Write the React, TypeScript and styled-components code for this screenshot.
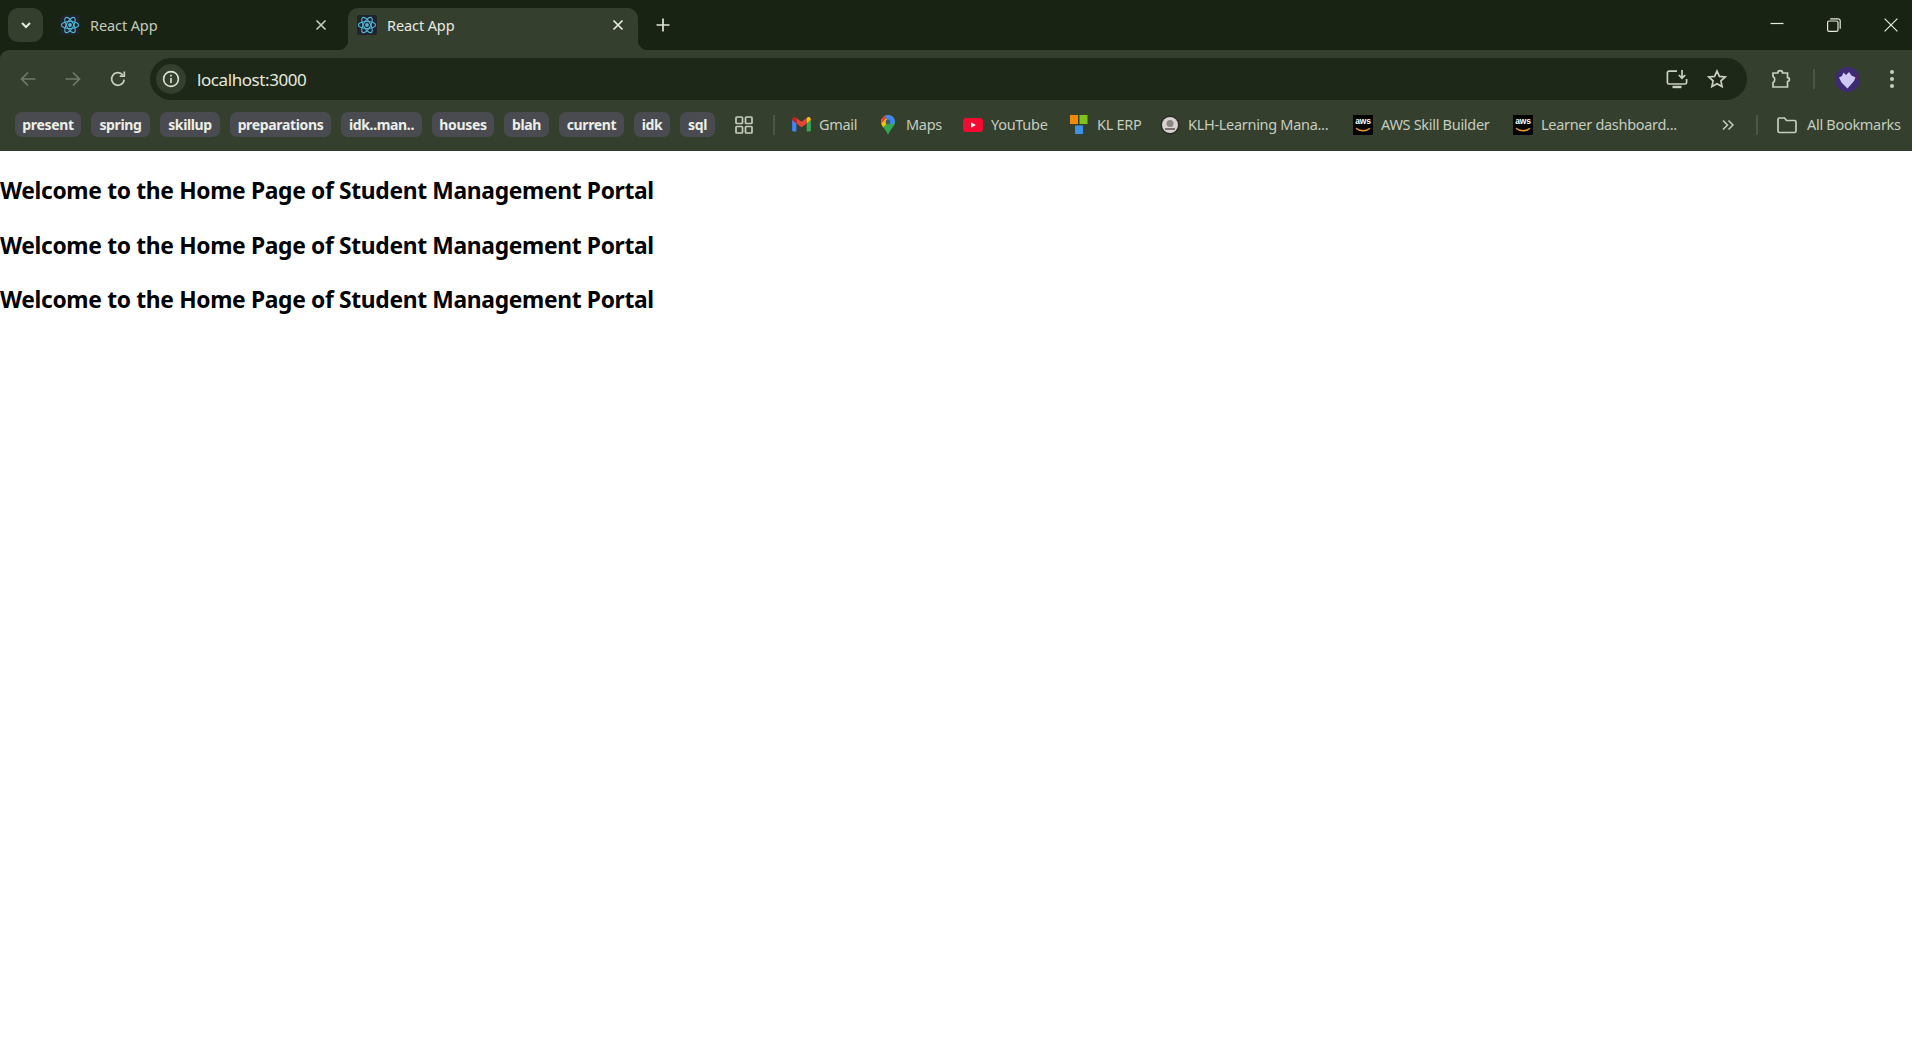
import React from "react";
import styled, { createGlobalStyle } from "styled-components";

const Global = createGlobalStyle`
  html, body { margin: 0; padding: 0; background: #fff; }
  body { font-family: "Noto Sans", "Open Sans", sans-serif; }
`;

const Page = styled.div`
  min-height: 1061px;
  display: flex;
  flex-direction: column;
  overflow: hidden;
`;

const Chrome = styled.header`
  background: #192314;
  display: flex;
  flex-direction: column;
`;

const TabStrip = styled.div`
  height: 50px;
  display: flex;
  padding-left: 8px;
  padding-right: 14px;
  box-sizing: border-box;
`;

const TabSearch = styled.div`
  width: 35px;
  height: 34px;
  margin-top: 8px;
  border-radius: 10px;
  background: #343f2e;
  display: flex;
  align-items: center;
  justify-content: center;
  color: #e6eadf;
`;

const Tab = styled.div<{ $active?: boolean; $ml: number }>`
  position: relative;
  width: 290px;
  height: 42px;
  margin-top: 8px;
  margin-left: ${(p) => p.$ml}px;
  padding: 0 13px 8px 9px;
  box-sizing: border-box;
  display: flex;
  align-items: center;
  border-radius: 10px 10px 0 0;
  background: ${(p) => (p.$active ? "#343f2e" : "transparent")};
  color: ${(p) => (p.$active ? "#e8ebe2" : "#c2cabb")};
  ${(p) =>
    p.$active &&
    `
    &::before, &::after {
      content: "";
      position: absolute;
      bottom: 0;
      width: 10px;
      height: 10px;
    }
    &::before {
      left: -10px;
      background: radial-gradient(circle at 0 0, transparent 10px, #343f2e 10.5px);
    }
    &::after {
      right: -10px;
      background: radial-gradient(circle at 100% 0, transparent 10px, #343f2e 10.5px);
    }
  `}
`;

const Favicon = styled.span`
  width: 20px;
  height: 20px;
  flex: none;
  background: #20232a;
  border-radius: 2px;
  display: flex;
`;

const TabTitle = styled.span`
  margin-left: 10px;
  font-size: 14.5px;
  letter-spacing: -0.1px;
  flex: 1;
  white-space: nowrap;
`;

const TabClose = styled.span`
  width: 14px;
  height: 14px;
  display: flex;
  color: inherit;
`;

const NewTab = styled.div`
  width: 16px;
  height: 16px;
  margin: 17px 0 0 17px;
  color: #dfe4d8;
  display: flex;
`;

const WindowControls = styled.div`
  margin-left: auto;
  display: flex;
  gap: 43px;
  padding-top: 18px;
  color: #e6eadf;
`;

const WindowIcon = styled.svg`
  width: 14px;
  height: 14px;
  display: block;
`;

const ToolRow = styled.div`
  height: 50px;
  background: #343f2e;
  border-radius: 9px 0 0 0;
  display: flex;
  align-items: flex-start;
  padding-left: 5px;
  box-sizing: border-box;
`;

const NavButton = styled.div<{ $dim?: boolean }>`
  width: 45px;
  height: 42px;
  margin-top: 8px;
  display: flex;
  align-items: center;
  justify-content: center;
  color: ${(p) => (p.$dim ? "#717b6a" : "#c9d0c2")};
`;

const AddressBar = styled.div`
  flex: 1;
  height: 42px;
  margin: 8px 0 0 10px;
  background: #1e2818;
  border-radius: 21px;
  display: flex;
  align-items: center;
  padding: 0 20px 0 6px;
`;

const InfoChip = styled.div`
  width: 30px;
  height: 30px;
  border-radius: 50%;
  background: #343f2e;
  display: flex;
  align-items: center;
  justify-content: center;
  color: #dfe4d8;
`;

const Url = styled.span`
  margin-left: 11px;
  font-size: 17px;
  letter-spacing: -0.42px;
  color: #e6eadf;
`;

const AddressActions = styled.div`
  margin-left: auto;
  display: flex;
  align-items: center;
  gap: 19px;
  color: #c9d0c2;
`;

const ToolActions = styled.div`
  width: 165px;
  box-sizing: border-box;
  height: 42px;
  margin-top: 8px;
  padding-left: 24px;
  display: flex;
  align-items: center;
  color: #c9d0c2;
`;

const Slot = styled.span<{ $ml: number }>`
  margin-left: ${(p) => p.$ml}px;
  display: flex;
  flex: none;
`;

const Divider = styled.span<{ $ml?: number }>`
  width: 2px;
  height: 20px;
  margin-left: ${(p) => p.$ml ?? 0}px;
  background: #4b5745;
  flex: none;
`;

const BookmarkBar = styled.nav`
  height: 51px;
  background: #343f2e;
  display: flex;
  align-items: center;
  padding: 0 0 2px 15px;
  box-sizing: border-box;
`;

const Chip = styled.span<{ $w: number }>`
  width: ${(p) => p.$w}px;
  height: 25px;
  margin-right: 10px;
  flex: none;
  border-radius: 7px;
  background: #4a4b50;
  color: #eceee8;
  font-size: 14px;
  font-weight: 700;
  letter-spacing: -0.35px;
  display: flex;
  align-items: center;
  justify-content: center;
  white-space: nowrap;
`;

const Bookmark = styled.span<{ $w: number; $ml?: number; $gap?: number }>`
  width: ${(p) => p.$w}px;
  margin-left: ${(p) => p.$ml ?? 0}px;
  flex: none;
  display: flex;
  align-items: center;
  gap: ${(p) => p.$gap ?? 8}px;
`;

const BookmarkLabel = styled.span`
  color: #c6cdbf;
  font-size: 14.5px;
  letter-spacing: -0.3px;
  white-space: nowrap;
  margin-top: -2px;
`;

const BookmarkIcon = styled.span`
  width: 20px;
  height: 20px;
  flex: none;
  display: flex;
  align-items: center;
  justify-content: center;
`;

const AwsTile = styled.span`
  width: 20px;
  height: 20px;
  background: #000;
  color: #fff;
  position: relative;
  display: flex;
  justify-content: center;
  font-family: "Liberation Sans", sans-serif;
  font-size: 8.5px;
  font-weight: 700;
  line-height: 13px;
  letter-spacing: -0.2px;
`;

const AwsSmile = styled.svg`
  position: absolute;
  left: 2px;
  bottom: 2px;
  width: 16px;
  height: 6px;
`;

const Main = styled.main`
  display: flex;
  flex-direction: column;
  gap: 23.2px;
  padding-top: 24.4px;
`;

const Heading = styled.h3`
  margin: 0;
  font-size: 22.8px;
  line-height: 31.2px;
  font-weight: 700;
  color: #000;
  letter-spacing: -0.33px;
`;

const ReactLogo = () => (
  <svg viewBox="0 0 20 20" width="20" height="20" fill="none" stroke="#4fb6d8" strokeWidth="1.1">
    <circle cx="10" cy="10" r="1.9" fill="#4fb6d8" stroke="none" />
    <ellipse cx="10" cy="10" rx="8.6" ry="3.5" />
    <ellipse cx="10" cy="10" rx="8.6" ry="3.5" transform="rotate(60 10 10)" />
    <ellipse cx="10" cy="10" rx="8.6" ry="3.5" transform="rotate(120 10 10)" />
  </svg>
);

const CloseGlyph = () => (
  <svg viewBox="0 0 14 14" width="14" height="14" fill="none" stroke="currentColor" strokeWidth="1.7">
    <path d="M2.5 2.5l9 9M11.5 2.5l-9 9" />
  </svg>
);

const Aws = () => (
  <AwsTile>
    aws
    <AwsSmile viewBox="0 0 16 6" fill="none" stroke="#f29a1f" strokeWidth="1.5">
      <path d="M1 1.2c4 3.4 10 3.4 14 0" />
    </AwsSmile>
  </AwsTile>
);

const chips: [string, number][] = [
  ["present", 66],
  ["spring", 59],
  ["skillup", 60],
  ["preparations", 101],
  ["idk..man..", 81],
  ["houses", 62],
  ["blah", 45],
  ["current", 65],
  ["idk", 36],
  ["sql", 35],
];

export default function App() {
  return (
    <Page>
      <Global />
      <Chrome>
        <TabStrip>
          <TabSearch>
            <svg viewBox="0 0 14 14" width="14" height="14" fill="none" stroke="currentColor" strokeWidth="2">
              <path d="M3 5l4 4 4-4" />
            </svg>
          </TabSearch>
          <Tab $ml={8}>
            <Favicon><ReactLogo /></Favicon>
            <TabTitle>React App</TabTitle>
            <TabClose><CloseGlyph /></TabClose>
          </Tab>
          <Tab $ml={7} $active>
            <Favicon><ReactLogo /></Favicon>
            <TabTitle>React App</TabTitle>
            <TabClose><CloseGlyph /></TabClose>
          </Tab>
          <NewTab>
            <svg viewBox="0 0 16 16" width="16" height="16" fill="none" stroke="currentColor" strokeWidth="1.7">
              <path d="M8 1.500v13M1.500 8h13" />
            </svg>
          </NewTab>
          <WindowControls>
            <WindowIcon viewBox="0 0 14 14" fill="none" stroke="currentColor" strokeWidth="1.2">
              <path d="M0.500 5.500h13" />
            </WindowIcon>
            <WindowIcon viewBox="0 0 14 14" fill="none" stroke="currentColor" strokeWidth="1.2">
              <rect x="0.600" y="3" width="10.400" height="10.400" rx="1.500" />
              <path d="M3.200 0.800h8a2 2 0 0 1 2 2v8" />
            </WindowIcon>
            <WindowIcon viewBox="0 0 14 14" fill="none" stroke="currentColor" strokeWidth="1.2">
              <path d="M0.600 0.600l12.800 12.800M13.400 0.600L0.600 13.400" />
            </WindowIcon>
          </WindowControls>
        </TabStrip>

        <ToolRow>
          <NavButton $dim>
            <svg viewBox="0 0 18 18" width="18" height="18" fill="none" stroke="currentColor" strokeWidth="1.7">
              <path d="M16.500 9H2.500M9 2.500L2.500 9 9 15.500" />
            </svg>
          </NavButton>
          <NavButton $dim>
            <svg viewBox="0 0 18 18" width="18" height="18" fill="none" stroke="currentColor" strokeWidth="1.7">
              <path d="M1.500 9h14M9 2.500L15.500 9 9 15.500" />
            </svg>
          </NavButton>
          <NavButton>
            <svg viewBox="0 0 18 18" width="18" height="18" fill="none" stroke="currentColor" strokeWidth="1.7">
              <path d="M15.200 9.600a6.300 6.300 0 1 1-1.400-4.600" />
              <path d="M15.300 1.600v4.600h-4.600" />
            </svg>
          </NavButton>
          <AddressBar>
            <InfoChip>
              <svg viewBox="0 0 18 18" width="18" height="18" fill="none" stroke="currentColor" strokeWidth="1.6">
                <circle cx="9" cy="9" r="7.400" />
                <path d="M9 8v5" />
                <path d="M9 4.800v1.800" />
              </svg>
            </InfoChip>
            <Url>localhost:3000</Url>
            <AddressActions>
              <svg viewBox="0 0 22 20" width="22" height="20" fill="none" stroke="currentColor" strokeWidth="1.7">
                <path d="M11 2.200H3a1.600 1.600 0 0 0-1.600 1.600v9.600A1.600 1.600 0 0 0 3 15h16a1.600 1.600 0 0 0 1.600-1.600V10" />
                <path d="M6.500 18h9" strokeWidth="2.400" />
                <path d="M16 1v8M12.800 6l3.200 3.200L19.200 6" />
              </svg>
              <svg viewBox="0 0 20 20" width="20" height="20" fill="none" stroke="currentColor" strokeWidth="1.7">
                <path d="M10 2l2.400 5.400 5.800.6-4.300 3.900 1.200 5.700L10 14.700l-5.100 2.900 1.200-5.700L1.800 8l5.800-.6z" />
              </svg>
            </AddressActions>
          </AddressBar>
          <ToolActions>
            <svg viewBox="0 0 20 20" width="20" height="20" fill="none" stroke="currentColor" strokeWidth="1.7">
              <path d="M2 4h4.800a2.400 2.400 0 0 1 4.800 0h4.900v4.700a1.900 1.900 0 0 1 0 3.800v5.500H2v-4.300a3.600 3.600 0 0 0 0-6.200z" />
            </svg>
            <Divider $ml={22} />
            <Slot $ml={20}>
              <svg viewBox="0 0 25 25" width="25" height="25">
                <circle cx="12.500" cy="12.500" r="12.500" fill="#3c2a72" />
                <path d="M20 5.500a12.500 12.500 0 0 1 3.500 7l-3 0z" fill="#5b2550" />
                <path d="M4 10.500l3-1.500 1.500-3.500 2.500 2.500 3-3 2.500 3.500 4 2-1.500 3.500-6.500 7.500-6-6z" fill="#cfc8f4" />
              </svg>
            </Slot>
            <Slot $ml={30}>
              <svg viewBox="0 0 4 18" width="4" height="18">
                <circle cx="2" cy="2" r="2" fill="currentColor" />
                <circle cx="2" cy="9" r="2" fill="currentColor" />
                <circle cx="2" cy="16" r="2" fill="currentColor" />
              </svg>
            </Slot>
          </ToolActions>
        </ToolRow>

        <BookmarkBar>
          {chips.map(([label, w]) => (
            <Chip key={label} $w={w}>{label}</Chip>
          ))}
          <Bookmark $w={38} $ml={10}>
            <svg viewBox="0 0 18 18" width="18" height="18" fill="none" stroke="#c6cdbf" strokeWidth="1.7">
              <rect x="1" y="1" width="6.500" height="6.500" rx="0.800" />
              <rect x="10.500" y="1" width="6.500" height="6.500" rx="0.800" />
              <rect x="1" y="10.500" width="6.500" height="6.500" rx="0.800" />
              <rect x="10.500" y="10.500" width="6.500" height="6.500" rx="0.800" />
            </svg>
          </Bookmark>
          <Divider />
          <Bookmark $w={87} $ml={16}>
            <BookmarkIcon>
              <svg viewBox="0 0 20 16" width="19" height="15">
                <path d="M0 3v11a1.500 1.500 0 0 0 1.500 1.500H4.500V7z" fill="#4285f4" />
                <path d="M15.500 7v8.500h3a1.500 1.500 0 0 0 1.500-1.500V3z" fill="#34a853" />
                <path d="M4.500 7L10 11l5.500-4V1l-5.500 4-5.500-4z" fill="#ea4335" />
                <path d="M0 3l4.500 4V1L3 0C1.500-.4 0 1 0 3z" fill="#c5221f" />
                <path d="M15.500 1v6L20 3c0-2-1.500-3.400-3-3z" fill="#fbbc04" />
              </svg>
            </BookmarkIcon>
            <BookmarkLabel>Gmail</BookmarkLabel>
          </Bookmark>
          <Bookmark $w={85}>
            <BookmarkIcon>
              <svg viewBox="0 0 14 20" width="14" height="20">
                <defs>
                  <clipPath id="pin">
                    <path d="M7 0a7 7 0 0 1 7 7c0 4.500-5 7-7 13-2-6-7-8.500-7-13a7 7 0 0 1 7-7z" />
                  </clipPath>
                </defs>
                <g clipPath="url(#pin)">
                  <rect width="14" height="20" fill="#34a853" />
                  <path d="M0 4h7v3L0 15z" fill="#fbbc04" />
                  <path d="M0 0h8L0 9z" fill="#ea4335" />
                  <path d="M4 0h10v9H9L7 7z" fill="#4285f4" />
                  <path d="M12 8l2-1v3z" fill="#34a853" />
                </g>
                <circle cx="7" cy="7" r="2.400" fill="#3c5a6e" />
              </svg>
            </BookmarkIcon>
            <BookmarkLabel>Maps</BookmarkLabel>
          </Bookmark>
          <Bookmark $w={106}>
            <BookmarkIcon>
              <svg viewBox="0 0 20 14" width="20" height="14">
                <rect width="20" height="14" rx="3.500" fill="#f50b32" />
                <path d="M8 4.200v5.600l4.800-2.800z" fill="#fff" />
              </svg>
            </BookmarkIcon>
            <BookmarkLabel>YouTube</BookmarkLabel>
          </Bookmark>
          <Bookmark $w={91}>
            <BookmarkIcon>
              <svg viewBox="0 0 18 19" width="18" height="19">
                <rect x="0" y="0" width="8" height="9" fill="#ef8a0b" />
                <rect x="9.500" y="0" width="8" height="9" fill="#7fc31c" />
                <rect x="5" y="10.500" width="8" height="8.500" fill="#3d94e6" />
              </svg>
            </BookmarkIcon>
            <BookmarkLabel>KL ERP</BookmarkLabel>
          </Bookmark>
          <Bookmark $w={193}>
            <BookmarkIcon>
              <svg viewBox="0 0 20 20" width="20" height="20">
                <circle cx="10" cy="10" r="9.500" fill="#2a2a28" />
                <circle cx="10" cy="10" r="8" fill="#d8d2d0" />
                <circle cx="10" cy="8.500" r="3.500" fill="#8a8684" />
                <path d="M5 13h10v2H5z" fill="#77716f" />
              </svg>
            </BookmarkIcon>
            <BookmarkLabel>KLH-Learning Mana...</BookmarkLabel>
          </Bookmark>
          <Bookmark $w={160}>
            <BookmarkIcon><Aws /></BookmarkIcon>
            <BookmarkLabel>AWS Skill Builder</BookmarkLabel>
          </Bookmark>
          <Bookmark $w={209}>
            <BookmarkIcon><Aws /></BookmarkIcon>
            <BookmarkLabel>Learner dashboard...</BookmarkLabel>
          </Bookmark>
          <Bookmark $w={34}>
            <svg viewBox="0 0 12 12" width="12" height="12" fill="none" stroke="#c6cdbf" strokeWidth="1.500">
              <path d="M1 1.500L5.500 6 1 10.500M6.500 1.500L11 6l-4.500 4.500" />
            </svg>
          </Bookmark>
          <Divider />
          <Bookmark $w={135} $ml={19} $gap={10}>
            <BookmarkIcon>
              <svg viewBox="0 0 20 18" width="20" height="18" fill="none" stroke="#c6cdbf" strokeWidth="1.700">
                <path d="M1 3.500A1.500 1.500 0 0 1 2.500 2h5l2 2.500h8A1.500 1.500 0 0 1 19 6v9a1.500 1.500 0 0 1-1.500 1.500h-15A1.500 1.500 0 0 1 1 15z" />
              </svg>
            </BookmarkIcon>
            <BookmarkLabel>All Bookmarks</BookmarkLabel>
          </Bookmark>
        </BookmarkBar>
      </Chrome>
      <Main>
        <Heading>Welcome to the Home Page of Student Management Portal</Heading>
        <Heading>Welcome to the Home Page of Student Management Portal</Heading>
        <Heading>Welcome to the Home Page of Student Management Portal</Heading>
      </Main>
    </Page>
  );
}
